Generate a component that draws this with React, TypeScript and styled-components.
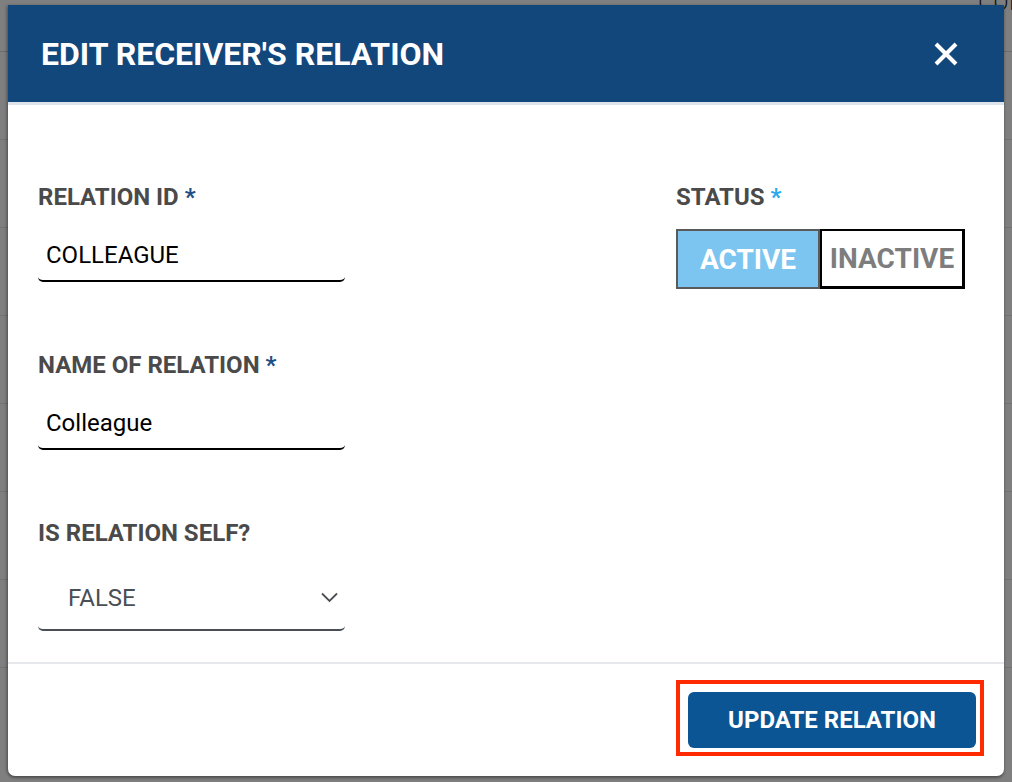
import React from "react";
import styled, { createGlobalStyle } from "styled-components";

const GlobalStyle = createGlobalStyle`
  html, body { margin: 0; padding: 0; }
  body { font-family: Roboto, "Liberation Sans", Arial, sans-serif; background: #7f7f7f; }
  * { box-sizing: border-box; }
`;

const Screen = styled.div`
  position: relative;
  width: 1012px;
  height: 782px;
  overflow: hidden;
  background: #ffffff;
`;

const UnderPage = styled.div`
  display: flex;
  flex-direction: column;
  height: 100%;
`;

const UnderTop = styled.div`
  height: 52px;
  display: flex;
  justify-content: flex-end;
  align-items: flex-start;
  border-bottom: 1px solid #d8d8d8;
`;

const UnderTopText = styled.span`
  font: 300 22px Roboto, sans-serif;
  color: #222;
  margin-top: -10px;
  margin-right: -14px;
  letter-spacing: 1px;
`;

const UnderRow = styled.div`
  height: 88px;
  border-bottom: 1px solid #e4e4e4;
`;

const Overlay = styled.div`
  position: absolute;
  inset: 0;
  background: rgba(0, 0, 0, 0.5);
  padding: 5px 8px 6px 8px;
  display: flex;
  align-items: flex-start;
`;

const Modal = styled.div`
  width: 996px;
  height: 771px;
  background: #ffffff;
  border-radius: 0 0 7px 7px;
  box-shadow: 0 2px 3px rgba(0, 0, 0, 0.35), -2px 0 3px rgba(0, 0, 0, 0.18);
  display: flex;
  flex-direction: column;
  overflow: hidden;
`;

const Header = styled.header`
  height: 100px;
  flex: none;
  background: #12477b;
  border-bottom: 3px solid #dde4eb;
  display: flex;
  align-items: center;
  justify-content: space-between;
  padding: 0 46px 0 33px;
`;

const Title = styled.h1`
  margin: 0;
  font: 700 32px/36px Roboto, sans-serif;
  color: #ffffff;
`;

const CloseButton = styled.button`
  width: 24px;
  height: 24px;
  padding: 0;
  border: none;
  background: transparent;
  display: flex;
  align-items: center;
  justify-content: center;
  cursor: pointer;
`;

const Body = styled.div`
  flex: 1;
  padding: 78px 30px 0 30px;
  display: grid;
  grid-template-columns: 307px 1fr;
  column-gap: 331px;
  align-content: start;
`;

const Column = styled.div`
  display: flex;
  flex-direction: column;
  gap: 69px;
`;

const Field = styled.div`
  display: flex;
  flex-direction: column;
  gap: 19px;
`;

const Label = styled.label`
  font: 700 24px/28px Roboto, sans-serif;
  color: #4a4a4a;
  white-space: nowrap;
`;

const Star = styled.span<{ $tone: "dark" | "light" }>`
  color: ${(p) => (p.$tone === "dark" ? "#1d4f85" : "#2aa9ee")};
`;

const TextInput = styled.input`
  width: 307px;
  height: 52px;
  padding: 0 8px;
  border: none;
  border-bottom: 2px solid #000000;
  border-radius: 5px;
  background: transparent;
  font: 400 24px Roboto, sans-serif;
  color: #000000;
  outline: none;
`;

const SelectBox = styled.div`
  width: 307px;
  height: 65px;
  padding: 0 7px 0 30px;
  border-bottom: 2px solid #4a4f55;
  border-radius: 5px;
  display: flex;
  align-items: center;
  justify-content: space-between;
  font: 400 24px Roboto, sans-serif;
  color: #4a4f55;
`;

const Toggle = styled.div`
  display: inline-flex;
  margin-top: -1px;
`;

const Segment = styled.button<{ $active?: boolean }>`
  width: ${(p) => (p.$active ? "144px" : "145px")};
  height: 60px;
  padding: 0;
  border: 2px solid ${(p) => (p.$active ? "#5a5a5a" : "#000000")};
  ${(p) => (p.$active ? "" : "border-width: 2px 3px 3px 2px;")}
  background: ${(p) => (p.$active ? "#7bc5f0" : "#ffffff")};
  color: ${(p) => (p.$active ? "#ffffff" : "#7d7d7d")};
  font: 700 28px Roboto, sans-serif;
  cursor: pointer;
`;

const Footer = styled.footer`
  height: 114px;
  flex: none;
  border-top: 2px solid #e6e8eb;
  display: flex;
  justify-content: flex-end;
  align-items: flex-start;
  padding: 16px 20px 0 0;
`;

const Highlight = styled.div`
  border: 4px solid #ff2a00;
  padding: 8px 4px 4px 8px;
  display: flex;
`;

const PrimaryButton = styled.button`
  width: 288px;
  height: 56px;
  border: none;
  border-radius: 6px;
  background: #0b5595;
  color: #ffffff;
  font: 700 24px Roboto, sans-serif;
  cursor: pointer;
`;

export default function App() {
  return (
    <>
      <GlobalStyle />
      <Screen>
        <UnderPage>
          <UnderTop>
            <UnderTopText>CON</UnderTopText>
          </UnderTop>
          <UnderRow />
          <UnderRow />
          <UnderRow />
          <UnderRow />
          <UnderRow />
          <UnderRow />
          <UnderRow />
        </UnderPage>
        <Overlay>
          <Modal>
            <Header>
              <Title>EDIT RECEIVER'S RELATION</Title>
              <CloseButton aria-label="Close">
                <svg width="24" height="24" viewBox="0 0 24 24">
                  <path d="M2 2 L22 22 M22 2 L2 22" stroke="#ffffff" strokeWidth="4" fill="none" />
                </svg>
              </CloseButton>
            </Header>
            <Body>
              <Column>
                <Field>
                  <Label>
                    RELATION ID <Star $tone="dark">*</Star>
                  </Label>
                  <TextInput defaultValue="COLLEAGUE" />
                </Field>
                <Field>
                  <Label>
                    NAME OF RELATION <Star $tone="dark">*</Star>
                  </Label>
                  <TextInput defaultValue="Colleague" />
                </Field>
                <Field>
                  <Label>IS RELATION SELF?</Label>
                  <SelectBox>
                    <span>FALSE</span>
                    <svg width="17" height="11" viewBox="0 0 17 11">
                      <polyline points="1,1.5 8.5,9 16,1.5" stroke="#4a4f55" strokeWidth="1.8" fill="none" />
                    </svg>
                  </SelectBox>
                </Field>
              </Column>
              <Column>
                <Field>
                  <Label>
                    STATUS <Star $tone="light">*</Star>
                  </Label>
                  <Toggle>
                    <Segment $active>ACTIVE</Segment>
                    <Segment>INACTIVE</Segment>
                  </Toggle>
                </Field>
              </Column>
            </Body>
            <Footer>
              <Highlight>
                <PrimaryButton>UPDATE RELATION</PrimaryButton>
              </Highlight>
            </Footer>
          </Modal>
        </Overlay>
      </Screen>
    </>
  );
}
